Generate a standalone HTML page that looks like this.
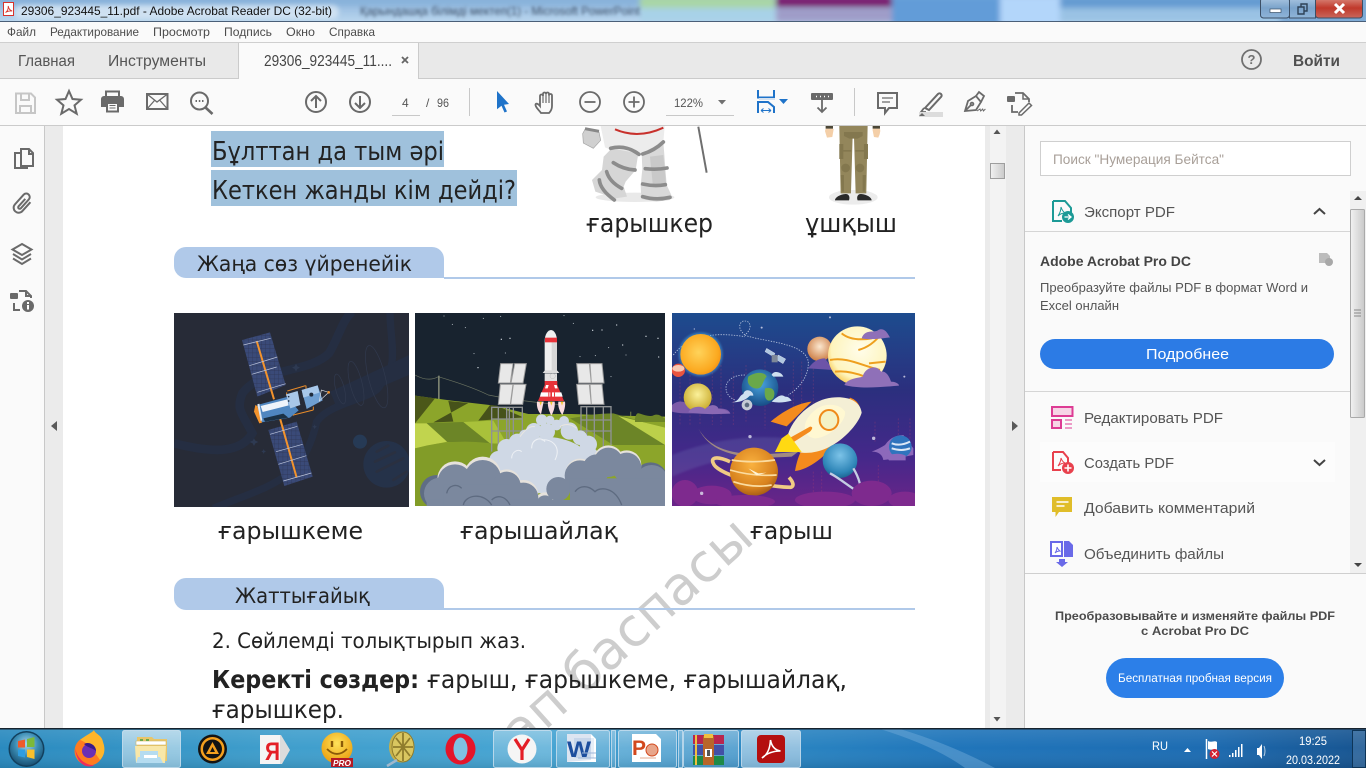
<!DOCTYPE html>
<html><head><meta charset="utf-8"><title>Acrobat Reader</title>
<style>
html,body{margin:0;padding:0;width:1366px;height:768px;overflow:hidden;background:#fff}
svg{display:block;overflow:hidden}
.u{font-family:"Liberation Sans",sans-serif}
.d{font-family:"DejaVu Sans",sans-serif;fill:#222}
</style></head><body>
<svg width="1366" height="768" viewBox="0 0 1366 768" xmlns="http://www.w3.org/2000/svg">
<defs>
<filter id="b2" x="-5%" y="-50%" width="110%" height="200%"><feGaussianBlur stdDeviation="1.7"/></filter>
<filter id="b1" x="-5%" y="-50%" width="110%" height="200%"><feGaussianBlur stdDeviation="2.5"/></filter>
<filter id="b3"><feGaussianBlur stdDeviation="3"/></filter>
<linearGradient id="tb" x1="0" x2="1" y1="0" y2="0">
<stop offset="0" stop-color="#2a8abf"/><stop offset=".2" stop-color="#3f9ecc"/><stop offset=".4" stop-color="#47a5d3"/><stop offset=".55" stop-color="#2c88c3"/><stop offset=".7" stop-color="#2075ba"/><stop offset=".88" stop-color="#1d6cb2"/><stop offset="1" stop-color="#175490"/></linearGradient>
<linearGradient id="tv" x1="0" x2="0" y1="0" y2="1"><stop offset="0" stop-color="#fff" stop-opacity=".1"/><stop offset=".5" stop-color="#fff" stop-opacity="0"/><stop offset="1" stop-color="#000" stop-opacity=".1"/></linearGradient>
<linearGradient id="btn" x1="0" x2="0" y1="0" y2="1"><stop offset="0" stop-color="#fff" stop-opacity=".32"/><stop offset="1" stop-color="#fff" stop-opacity=".12"/></linearGradient>
<linearGradient id="btnA" x1="0" x2="0" y1="0" y2="1"><stop offset="0" stop-color="#fff" stop-opacity=".6"/><stop offset="1" stop-color="#fff" stop-opacity=".38"/></linearGradient>
<linearGradient id="tt" x1="0" x2="0" y1="0" y2="1"><stop offset="0" stop-color="#8fb6dd"/><stop offset="1" stop-color="#bad6ee"/></linearGradient>
<linearGradient id="cls" x1="0" x2="0" y1="0" y2="1"><stop offset="0" stop-color="#d9867a"/><stop offset=".5" stop-color="#c0392b"/><stop offset="1" stop-color="#c9675c"/></linearGradient>
<linearGradient id="wb" x1="0" x2="0" y1="0" y2="1"><stop offset="0" stop-color="#a9c5e0"/><stop offset=".5" stop-color="#7ba3cb"/><stop offset="1" stop-color="#8fb4d8"/></linearGradient>
<radialGradient id="orb" cx=".5" cy=".35" r=".7"><stop offset="0" stop-color="#a8d8ec"/><stop offset=".5" stop-color="#3a8cb4"/><stop offset="1" stop-color="#14486a"/></radialGradient>
<linearGradient id="scrollT" x1="0" x2="1" y1="0" y2="0"><stop offset="0" stop-color="#f2f2f2"/><stop offset="1" stop-color="#c9c9c9"/></linearGradient>
<linearGradient id="sp" x1="0" x2="0" y1="0" y2="1"><stop offset="0" stop-color="#1d4c8e"/><stop offset=".4" stop-color="#2b2f7e"/><stop offset=".75" stop-color="#45288a"/><stop offset="1" stop-color="#6a2488"/></linearGradient>
<radialGradient id="sun" cx=".45" cy=".45" r=".6"><stop offset="0" stop-color="#ffd35a"/><stop offset=".8" stop-color="#fba81f"/><stop offset="1" stop-color="#f58f12"/></radialGradient>
<radialGradient id="jup" cx=".55" cy=".4" r=".7"><stop offset="0" stop-color="#fffdea"/><stop offset=".7" stop-color="#fef4bd"/><stop offset="1" stop-color="#f7b924"/></radialGradient>
<radialGradient id="sat" cx=".45" cy=".35" r=".7"><stop offset="0" stop-color="#f9b13f"/><stop offset=".7" stop-color="#d8821e"/><stop offset="1" stop-color="#9c5412"/></radialGradient>
<radialGradient id="blu" cx=".5" cy=".35" r=".7"><stop offset="0" stop-color="#7cc3e8"/><stop offset=".7" stop-color="#2f86b8"/><stop offset="1" stop-color="#175a88"/></radialGradient>
<radialGradient id="earth" cx=".5" cy=".4" r=".65"><stop offset="0" stop-color="#4aa5e0"/><stop offset="1" stop-color="#12467f"/></radialGradient>
<radialGradient id="ven" cx=".5" cy=".4" r=".6"><stop offset="0" stop-color="#fbf19a"/><stop offset="1" stop-color="#c9aa2c"/></radialGradient>
<radialGradient id="mar" cx=".5" cy=".4" r=".65"><stop offset="0" stop-color="#fbe7cf"/><stop offset="1" stop-color="#c9753a"/></radialGradient>
<radialGradient id="smile" cx=".5" cy=".35" r=".7"><stop offset="0" stop-color="#ffe25a"/><stop offset="1" stop-color="#e89a0a"/></radialGradient>
<clipPath id="c1"><rect x="174" y="313" width="235" height="194"/></clipPath>
<clipPath id="c2"><rect x="15" y="24" width="750" height="579"/></clipPath>
<clipPath id="c3"><rect x="21" y="24" width="729" height="579"/></clipPath>
<clipPath id="doc"><rect x="63" y="126" width="922" height="602"/></clipPath>
<pattern id="grid" width="13" height="13" patternUnits="userSpaceOnUse"><rect width="13" height="13" fill="#3a4a78"/><path d="M0 0H13M0 0V13" stroke="#2d3654" stroke-width="2"/></pattern>
</defs>

<!-- title bar -->
<rect width="1366" height="22" fill="url(#tt)"/>
<g filter="url(#b3)">
<rect x="640" y="-4" width="135" height="12" fill="#a9d6a6"/>
<rect x="640" y="8" width="135" height="14" fill="#a8d2e8"/>
<rect x="0" y="-6" width="640" height="11" fill="#88b2da"/>
<rect x="776" y="-4" width="116" height="11" fill="#7a1e70"/>
<rect x="776" y="8" width="116" height="14" fill="#9f9cc8"/>
<rect x="892" y="-4" width="110" height="30" fill="#629cd8"/>
<rect x="1000" y="-4" width="60" height="30" fill="#b3d6fa"/>
<rect x="1060" y="-4" width="220" height="12" fill="#659bd2"/>
<rect x="1060" y="8" width="220" height="14" fill="#9ac2e4"/>
<rect x="1280" y="-4" width="90" height="30" fill="#7eaad6"/>
</g>
<rect x="14" y="5" width="325" height="14" rx="7" fill="#dce9f5" opacity=".75" filter="url(#b1)"/>
<text class="u" x="360" y="15" font-size="12" fill="#3c5068" filter="url(#b2)" textLength="280" lengthAdjust="spacingAndGlyphs">Қарындашқа білімді мектеп(1) - Microsoft PowerPoint</text>
<rect x="0" y="21" width="1366" height="1" fill="#4a5f78"/>
<rect x="3.5" y="2.5" width="10" height="13" fill="#fff" stroke="#d8342c"/>
<path d="M5.5 12.5c2-1 3-4 2.700-6.500.4 2.500 2 4.500 4 5-2-.2-4.800.2-6.700 1.500z" fill="none" stroke="#d8342c" stroke-width=".9"/>
<text class="u" x="21" y="15" font-size="12" fill="#111" textLength="311" lengthAdjust="spacingAndGlyphs">29306_923445_11.pdf - Adobe Acrobat Reader DC (32-bit)</text>
<!-- window buttons -->
<rect x="1260.500" y="-2" width="29" height="20" rx="3" fill="url(#wb)" stroke="#3c4f66"/>
<rect x="1289.500" y="-2" width="26" height="20" fill="url(#wb)" stroke="#3c4f66"/>
<rect x="1315.500" y="-2" width="47" height="20" rx="3" fill="url(#cls)" stroke="#3c4f66"/>
<rect x="1270" y="9" width="11" height="3.500" fill="#fff" stroke="#3a5068" stroke-width=".7"/>
<path d="M1298 7h6v7h-6zM1301 7V4h6v7h-3" fill="none" stroke="#2e4257" stroke-width="1.400"/>
<path d="M1335 4l9 9M1344 4l-9 9" stroke="#fff" stroke-width="3"/>

<!-- menu -->
<rect y="22" width="1366" height="20" fill="#fafafa"/>
<rect y="42" width="1366" height="1" fill="#cfcfcf"/>
<g class="u" font-size="12" fill="#4c4c4c">
<text x="7" y="36" textLength="29" lengthAdjust="spacingAndGlyphs">Файл</text>
<text x="50" y="36" textLength="89" lengthAdjust="spacingAndGlyphs">Редактирование</text>
<text x="153" y="36" textLength="57" lengthAdjust="spacingAndGlyphs">Просмотр</text>
<text x="224" y="36" textLength="48" lengthAdjust="spacingAndGlyphs">Подпись</text>
<text x="286" y="36" textLength="29" lengthAdjust="spacingAndGlyphs">Окно</text>
<text x="329" y="36" textLength="46" lengthAdjust="spacingAndGlyphs">Справка</text>
</g>
<!-- tabs -->
<rect y="43" width="1366" height="35" fill="#e9e9e9"/>
<rect y="78" width="1366" height="1" fill="#cbcbcb"/>
<rect x="239" y="43" width="179" height="36" fill="#fafafa"/>
<path d="M238.500 43V79M418.500 43V79" stroke="#cbcbcb"/>
<g class="u" font-size="15.500" fill="#555">
<text x="18" y="66" textLength="57" lengthAdjust="spacingAndGlyphs">Главная</text>
<text x="108" y="66" textLength="98" lengthAdjust="spacingAndGlyphs">Инструменты</text>
<text x="264" y="66" textLength="128" lengthAdjust="spacingAndGlyphs" fill="#444">29306_923445_11....</text>
</g>
<path d="M402 57l6 6M408 57l-6 6" stroke="#666" stroke-width="1.800"/>
<circle cx="1251.500" cy="59.500" r="9.500" fill="none" stroke="#707070" stroke-width="1.800"/>
<text class="u" x="1251.500" y="64" font-size="13" font-weight="bold" fill="#707070" text-anchor="middle">?</text>
<text class="u" x="1293" y="66" font-size="15.500" font-weight="bold" fill="#505050" textLength="47" lengthAdjust="spacingAndGlyphs">Войти</text>

<!-- toolbar -->
<rect y="79" width="1366" height="46" fill="#fafafa"/>
<rect y="125" width="1366" height="1" fill="#cbcbcb"/>
<g fill="none" stroke="#6a6a6a" stroke-width="2">
<g stroke="#c6c6c6"><path d="M16 93.500h15l4 4v15.500H16z"/><path d="M21 94v6h8v-6M20 113v-7h11v7"/></g>
<path d="M69 91l3.500 8 8.500.7-6.500 5.700 2.200 8.300L69 109l-7.700 4.700 2.200-8.300-6.500-5.700 8.500-.7z"/>
<path d="M106 98v-6.500h13V98"/>
<path d="M106 106h-4v-7a2 2 0 0 1 2-2h17a2 2 0 0 1 2 2v7h-4" fill="#6a6a6a"/>
<rect x="107" y="103" width="11" height="8.500" fill="#fafafa"/>
<path d="M109.500 105.500h6M109.500 108h6" stroke-width="1"/>
<rect x="147" y="94" width="20.500" height="15"/>
<path d="M147 94l10 8 10.500-8M147 109l7.500-8.500M167.500 109l-7.500-8.500" stroke-width="1.300"/>
<circle cx="199.500" cy="101" r="8.500"/><path d="M205.500 107.500l7 6.500" stroke-width="2.600"/>
<path d="M195.500 101h1.500M198.800 101h1.500M202 101h1.500" stroke-width="2"/>
<circle cx="316" cy="102" r="10"/><path d="M316 108v-12M311 101l5-5 5 5"/>
<circle cx="360" cy="102" r="10"/><path d="M360 96v12M355 103l5 5 5-5"/>
</g>
<text class="u" x="402" y="107" font-size="12" fill="#555">4</text>
<text class="u" x="426" y="107" font-size="12" fill="#555">/</text>
<text class="u" x="437" y="107" font-size="12" fill="#555" textLength="12" lengthAdjust="spacingAndGlyphs">96</text>
<rect x="392" y="115" width="28" height="1" fill="#c8c8c8"/>
<rect x="469" y="88" width="1" height="28" fill="#c8c8c8"/>
<path d="M497 91l12 13-5 .8 3 6.700-2.500 1-3-6.700-4.500 3.500z" fill="#1f73c9"/>
<g fill="none" stroke="#6a6a6a" stroke-width="1.800">
<path d="M541 113c-2-3-6-6-5.500-8.500.5-1.500 2.500-1 4.500 1.500V96a1.500 1.500 0 0 1 3 0v-2a1.500 1.500 0 0 1 3 0a1.500 1.500 0 0 1 3 0v1.500a1.500 1.500 0 0 1 3 0V106c0 3-1 5-3 7z"/>
<path d="M543 96v7M546 94v9M549 94v9" stroke-width="1.200"/>
<circle cx="590" cy="102" r="10"/><path d="M584.500 102h11"/>
<circle cx="634" cy="102" r="10"/><path d="M628.500 102h11M634 96.500v11"/>
<path d="M822 100v12M817.500 107.500l4.500 4.500 4.500-4.500" stroke-width="1.800"/>
<path d="M878 93h19v15h-8l-4 5v-5h-7z" stroke-width="2"/>
<path d="M882 98h11M882 102h8" stroke-width="1.200"/>
<path d="M925 108l13-14c2-2 5 1 3 3l-12 13z" stroke-width="2"/>
<path d="M924 108l-3 4h5"/>
<path d="M965 111l3-10 8-5 5 6-5 8z"/><path d="M976 96l3-4 5 4-3 6"/><path d="M965 111l6-6"/><circle cx="972" cy="104" r="1.400"/>
<path d="M1015 93h8l6 6v3M1012 105v7h6"/><path d="M1023 93v6h6" stroke-width="1.500"/>
<path d="M1019 113l10-10 2.500 2.500-10 9.500h-2.500z" stroke-width="1.500"/>
</g>
<rect x="1007" y="96" width="8" height="6" rx="1" fill="#6a6a6a"/>
<rect x="919" y="112" width="24" height="5" fill="#dcdcdc"/>
<path d="M919 116l3-3 3 3z" fill="#6a6a6a"/>
<path d="M977 111l3-2 .7 2 2-2 .7 2 2-2" fill="none" stroke="#6a6a6a"/>
<rect x="811" y="93" width="22" height="7" rx="1" fill="#6a6a6a"/>
<path d="M816 96.500h1M820 96.500h1M824 96.500h1M828 96.500h1" stroke="#fff" stroke-width="1.500"/>
<text class="u" x="674" y="107" font-size="12" fill="#555" textLength="29" lengthAdjust="spacingAndGlyphs">122%</text>
<path d="M718 100h8l-4 4.500z" fill="#707070"/>
<rect x="666" y="115" width="68" height="1" fill="#c8c8c8"/>
<g fill="none" stroke="#1f73c9" stroke-width="2"><path d="M758 90v7.500h16V90"/><path d="M758 113v-11h10l6 5v6"/></g>
<rect x="759" y="98" width="16" height="2" fill="#d5e2f0"/>
<path d="M761 110.500h10M761 110.500l2.500-2M761 110.500l2.500 2M771 110.500l-2.500-2M771 110.500l-2.500 2" stroke="#1f73c9" fill="none"/>
<path d="M779 99h9l-4.500 5z" fill="#1f73c9"/>
<rect x="854" y="88" width="1" height="28" fill="#c8c8c8"/>

<!-- left panel + gray -->
<rect y="126" width="44" height="602" fill="#fafafa"/>
<rect x="44" y="126" width="1" height="602" fill="#c8c8c8"/>
<rect x="45" y="126" width="18" height="602" fill="#ebebeb"/>
<path d="M57 421v10l-6-5z" fill="#5a5a5a"/>
<g fill="none" stroke="#6a6a6a" stroke-width="2">
<path d="M21 149h8l4 4v13H21z"/><path d="M29 149v5h4"/><path d="M21 153h-6v15h12v-2"/>
<path d="M27 197v12a5 5 0 0 1-10 0V196a3.500 3.500 0 0 1 7 0v12a1.500 1.500 0 0 1-3 0v-10" transform="rotate(42 22 204)"/>
<path d="M22 244l9.500 5.500L22 255l-9.500-5.500z"/><path d="M13 254l9 5.500 9-5.500M13 258.500l9 5.500 9-5.500"/>
<path d="M19 291h7l5 5v2M14 303v7h6"/><path d="M26 291v5h5"/>
</g>
<rect x="10" y="293" width="8" height="6" rx="1" fill="#6a6a6a"/>
<circle cx="28" cy="306" r="6" fill="#6a6a6a"/><rect x="27" y="305" width="2" height="4.500" fill="#fff"/><rect x="27" y="302" width="2" height="2" fill="#fff"/>

<!-- page -->
<rect x="63" y="126" width="922" height="602" fill="#fff"/>
<rect x="985" y="126" width="39" height="602" fill="#ebebeb"/>
<rect x="990" y="126" width="16" height="602" fill="#f3f3f3"/>
<path d="M993.500 134h7l-3.500-4.500z" fill="#555"/>
<path d="M993.500 717h7l-3.500 4.500z" fill="#555"/>
<rect x="990.500" y="163.500" width="14" height="15" fill="url(#scrollT)" stroke="#9e9e9e"/>
<path d="M1012 421v10l6-5z" fill="#5a5a5a"/>
<rect x="1024" y="126" width="1" height="602" fill="#c8c8c8"/>

<g clip-path="url(#doc)">
<!-- watermark -->
<text class="d" transform="translate(756,541) rotate(-42)" text-anchor="end" font-size="53" style="fill:#cdcdcd">ап баспасы</text>

<!-- highlighted lines -->
<rect x="211" y="131" width="233" height="36" fill="#9fc1dc"/>
<rect x="211" y="170" width="306" height="36" fill="#9fc1dc"/>
<text class="d" x="212" y="160" font-size="26" textLength="232" lengthAdjust="spacingAndGlyphs">Бұлттан да тым әрі</text>
<text class="d" x="212" y="199" font-size="26" textLength="304" lengthAdjust="spacingAndGlyphs">Кеткен жанды кім дейді?</text>

<!-- astronaut -->
<g transform="translate(570,120) scale(.3333)">
<ellipse cx="195" cy="232" rx="118" ry="14" fill="#e9e9e9"/>
<path d="M385 20l25 138" stroke="#6f6f6f" stroke-width="6"/>
<path d="M45 28l42 8 5 25-22 24-30-16-2-28z" fill="#d0d0d0" stroke="#a5a5a5" stroke-width="2"/>
<path d="M45 26l42 8" stroke="#888" stroke-width="9"/>
<path d="M92 18h192l-4 50-45 34-25 2-8 10-72-22-25-10z" fill="#ececec"/>
<path d="M135 28q70 30 145-5" fill="none" stroke="#c8312c" stroke-width="6"/>
<path d="M125 85l80 15-8 50-30 35-6 15 10 30-35 5-60-20-10-35 30-30 5-40z" fill="#d6d6d6"/>
<path d="M215 100l65-35 10 130 14 30-5 15-40 5-45-8-2-40 5-50z" fill="#d9d9d9"/>
<path d="M240 110l40-5 8 85-40 0z" fill="#c9c9c9"/>
<path d="M122 85q45-12 85 18M218 102q35-10 62-36M130 128q30 20 65 22M226 146q35 4 65-2M110 155q8 30 45 50M218 192q35 8 68 2M88 180q3 30 45 60M218 230q40 12 82 2" fill="none" stroke="#8c8c8c" stroke-width="11" stroke-linecap="round"/>
</g>
<!-- soldier -->
<g transform="translate(570,120) scale(.3333)">
<ellipse cx="850" cy="232" rx="73" ry="22" fill="#ececec"/>
<path d="M808 18h85l-4 202h-32l-5-172h-4l-5 172h-31z" fill="#93865b"/>
<path d="M822 36h56v12l-15 8h-25l-16-8z" fill="#83774e"/>
<path d="M808 72h12v45h-12zM882 72h12v45h-12zM816 90h28v5h-28zM856 90h28v5h-28z" fill="#83774e"/>
<circle cx="827" cy="144" r="13" fill="#83774e"/><circle cx="870" cy="144" r="13" fill="#83774e"/>
<path d="M812 165h10v50h-7zM878 165h10l-3 50h-7z" fill="#83774e"/>
<path d="M795 241c0-8 14-18 32-19 12 0 13 12 10 19zM905 241c0-8-14-18-32-19-12 0-13 12-10 19z" fill="#2a2a2a"/>
<path d="M767 26h22l2 2-4 23-16 2-6-20z" fill="#f4cfa8"/><path d="M908 26h22l1 7-2 10-4 10-13-2-4-20z" fill="#f4cfa8"/>
<path d="M767 18h22v8h-22zM908 18h22v8h-22z" fill="#4a4636"/>
</g>
<text class="d" x="586" y="232" font-size="26" textLength="127" lengthAdjust="spacingAndGlyphs">ғарышкер</text>
<text class="d" x="805" y="232" font-size="26" textLength="92" lengthAdjust="spacingAndGlyphs">ұшқыш</text>

<!-- section 1 -->
<path d="M186 247h246a12 12 0 0 1 12 12v19H186a12 12 0 0 1-12-12v-7a12 12 0 0 1 12-12z" fill="#b0c9e9"/>
<rect x="444" y="277" width="471" height="2" fill="#b0c9e9"/>
<text class="d" x="197" y="271" font-size="21" textLength="215" lengthAdjust="spacingAndGlyphs">Жаңа сөз үйренейік</text>

<!-- image 1 satellite -->
<g clip-path="url(#c1)">
<rect x="174" y="313" width="235" height="194" fill="#272b37"/>
<g transform="translate(170,305) scale(.33333)">
<g fill="none" stroke="#252e42" stroke-width="26">
<path d="M12 415c120 30 200 30 235-30-30-60-50-70-30-120 60-80 200-60 260-120 30-50 40-100 70-125"/>
<path d="M130 610c170-70 270-80 310-260 40-60 180-70 190-110 60-50 30-130 30-220" stroke-width="22"/>
</g>
<path d="M480 260q90-40 237-110v60q-140 60-220 90z" fill="#252e42"/>
<g fill="none" stroke="#313a4f" stroke-width="2"><ellipse cx="510" cy="252" rx="13" ry="46" transform="rotate(-14 510 252)"/><ellipse cx="558" cy="235" rx="18" ry="68" transform="rotate(-14 558 235)"/><ellipse cx="620" cy="215" rx="25" ry="96" transform="rotate(-14 620 215)"/></g>
<circle cx="650" cy="478" r="70" fill="#253249"/>
<g fill="none" stroke="#2a3040" stroke-width="8" stroke-linecap="round"><path d="M620 440l35-18M615 470l60-28M620 500l80-40M670 525l40-25"/></g>
<circle cx="570" cy="410" r="21" fill="#263a55"/>
<g fill="#2e3a52"><path d="M378 176l4 8 8 4-8 4-4 8-4-8-8-4 8-4zM252 400l4 7 9 4-9 4-4 8-4-8-9-4 9-4zM434 358l2 5 5 2-5 3-2 5-2-5-5-3 5-2zM281 432l2 5 5 2-5 3-2 5-2-5-5-3 5-2z"/></g>
<path d="M216 105l84-23 47 158-85 35z" fill="url(#grid)"/>
<path d="M295 375l85-25 48 165-85 28z" fill="url(#grid)"/>
<path d="M260 108l52 175M330 340l50 178" stroke="#f3932c" stroke-width="6"/>
<path d="M220 120l82-20M238 182l84-26M245 208l75-22M262 262l85-26M300 388l82-24M318 440l80-22M325 478l84-26M340 528l84-24" stroke="#bcc4da" stroke-width="2"/>
<path d="M352 258l55-16M370 330l60-15" stroke="#e88b2a" stroke-width="3" fill="none"/>
<path d="M350 262v10M408 242v10M370 332v-10M430 315v-10" stroke="#e88b2a" stroke-width="3"/>
<path d="M262 300l88-24 36 40-26 22-90 15z" fill="#4f86c0"/>
<path d="M272 303l80-20 4 18-78 20z" fill="#eef3fa"/>
<path d="M280 340l60-14 15 12-70 12z" fill="#1b3145"/>
<path d="M348 268l35-10 8 42-30 10z" fill="#a9c7e8"/>
<path d="M395 255l48-14 15 45-48 26z" fill="#6f9fd2"/><path d="M395 255l48-14 5 22-48 15z" fill="#a8c8ea"/>
<circle cx="424" cy="269" r="6" fill="#1f2b3c"/>
<circle cx="356" cy="275" r="2.500" fill="#1f2b3c"/><circle cx="356" cy="288" r="2.500" fill="#1f2b3c"/>
<path d="M256 300l-4 20 16 35 8-2-14-50z" fill="#f3932c"/><path d="M262 298l10 50 5-2-9-50z" fill="#dfe9f5"/>
<path d="M448 288l6-33 22 7z" fill="none" stroke="#d9dde5" stroke-width="2"/><circle cx="476" cy="262" r="4" fill="#f3932c"/>
</g>
</g>

<!-- image 2 rocket -->
<g transform="translate(410,305) scale(.33333)">
<g clip-path="url(#c2)">
<rect x="15" y="24" width="750" height="579" fill="#18232f"/>
<g fill="#cfd6dc"><circle cx="102" cy="33" r="1.500"/><circle cx="220" cy="40" r="1.500"/><circle cx="127" cy="58" r="1.500"/><circle cx="272" cy="34" r="1.500"/><circle cx="166" cy="68" r="1.500"/><circle cx="300" cy="100" r="2"/><circle cx="274" cy="103" r="2"/><circle cx="192" cy="146" r="1.500"/><circle cx="204" cy="188" r="2"/><circle cx="286" cy="144" r="1.500"/><circle cx="548" cy="76" r="2"/><circle cx="576" cy="75" r="2"/><circle cx="620" cy="60" r="2"/><circle cx="708" cy="94" r="2"/><circle cx="744" cy="100" r="2"/><circle cx="638" cy="120" r="2"/><circle cx="596" cy="128" r="1.500"/><circle cx="648" cy="150" r="1.500"/><circle cx="746" cy="156" r="2"/><circle cx="556" cy="152" r="1.500"/><circle cx="510" cy="155" r="1.500"/><circle cx="490" cy="55" r="1.500"/><circle cx="462" cy="32" r="1.500"/><circle cx="603" cy="215" r="1.500"/></g>
<path d="M15 210q40 22 70 5 100 30 150 55 100 20 230 30" fill="none" stroke="#6a7260" stroke-width="2"/>
<rect x="84" y="212" width="5" height="75" fill="#7b8270"/>
<rect x="660" y="320" width="4" height="22" fill="#5d6a45"/>
<path d="M15 272l110 15 130 15 100 25 130 0 135 5 245 5v270H15z" fill="#8ca52a"/>
<path d="M15 272l60 8-60 75z" fill="#4b5719"/>
<path d="M115 288l60 6-105 58 60-2z" fill="#46521a"/>
<path d="M240 300l20 2 80 35-135 10z" fill="#46521a"/>
<path d="M15 355l35 0 62 55-97 20z" fill="#c1d44e"/>
<path d="M50 354l110-3 82 65-130-5z" fill="#6c8527"/>
<path d="M160 351l90-4 40 68-50 0z" fill="#a9c13a"/>
<path d="M610 325q-30 0-70 5l-60 10 130 80 155 0v-50z" fill="#6c8527"/>
<path d="M625 333l140 35v52z" fill="#bcd04a"/>
<path d="M15 430q150-40 300 0v173H15z" fill="#829c28"/>
<path d="M300 420h465v183H300z" fill="#8ca52a"/>
<path d="M675 340c5-20 10-15 15-14 15 5 30 10 40 5 15-5 20 0 35 10v10h-90z" fill="#6c8527"/>
<g stroke="#8f9294" stroke-width="4" fill="none">
<path d="M245 440V307h92v120M265 440V307M290 420V307M310 420V307M298 400V307M245 378h92M245 342h92"/>
<path d="M513 420V305h90v115M530 430V305M553 430V305M580 430V305M513 345h90M513 378h90"/>
</g>
<g fill="#e8e8e8" stroke="#9c9c9c" stroke-width="3">
<path d="M272 176h37l-8 58h-36zM314 176h35l-10 58h-36zM271 238h38l-8 60h-36zM310 238h38l-10 60h-36z"/>
<path d="M500 176h38l6 58h-38zM540 176h36l6 58h-38zM500 238h38l6 60h-38zM540 238h36l6 60h-38z"/>
</g>
<path d="M404 108c0-20 10-33 19-33s18 13 18 33v90h-37z" fill="#efefef"/>
<path d="M425 108h16v90h-16z" fill="#d7d7d7"/>
<rect x="405" y="98" width="36" height="14" fill="#e8333a"/>
<path d="M398 204q6-8 8-8h34q2 0 8 8z" fill="#ddd"/><rect x="404" y="205" width="37" height="23" fill="#e2e2e2"/>
<circle cx="428" cy="213" r="8" fill="none" stroke="#aaa"/>
<path d="M404 228h38v12l20 48h-78l20-48z" fill="#e8333a"/>
<path d="M393 262h61l4 13h-68zM408 240l8 0-3 10h-8zM432 240l8 0 3 10h-8z" fill="#fff"/>
<path d="M415 262h3v13h-3zM432 262h3v13h-3zM421 240h5v40h-5z" fill="#e8333a"/>
<path d="M381 290h20l-8 38c-8-8-14-22-12-38zM414 290h20c2 12-2 28-10 42-6-12-12-28-10-42zM445 290h20c2 12-2 28-8 40-8-10-14-26-12-40z" fill="#fbdcdf"/>
<path d="M388 290h8l-4 12zM420 290h8l-4 12zM452 290h8l-4 12z" fill="#f5c92d"/>
<!-- light cloud -->
<g fill="#cfd8e5">
<circle cx="395" cy="345" r="17"/><circle cx="420" cy="345" r="13"/><circle cx="462" cy="348" r="15"/><circle cx="440" cy="360" r="16"/><circle cx="372" cy="378" r="24"/><circle cx="345" cy="392" r="18"/><circle cx="410" cy="380" r="25"/><circle cx="478" cy="378" r="26"/><circle cx="510" cy="398" r="22"/><circle cx="322" cy="412" r="26"/><circle cx="535" cy="418" r="26"/><circle cx="290" cy="430" r="28"/><circle cx="265" cy="465" r="27"/><circle cx="540" cy="450" r="24"/><ellipse cx="400" cy="480" rx="145" ry="85"/>
</g>
<path d="M365 430c0-30 30-35 40-20M395 405c30-5 60 20 40 60M305 460c0-20 20-30 30-20" fill="none" stroke="#eef1f5" stroke-width="3"/>
<path d="M330 395q25-35 45-30M450 365q25-15 50 5" fill="none" stroke="#e9e6e0" stroke-width="3"/>
<!-- gray clouds -->
<circle cx="80" cy="560" r="50" fill="#5f6d84"/>
<circle cx="722" cy="522" r="50" fill="#5f6d84"/>
<g fill="#e6e2dc">
<circle cx="135" cy="522" r="53"/><circle cx="218" cy="510" r="55"/><circle cx="340" cy="570" r="45"/><circle cx="405" cy="590" r="28"/><circle cx="510" cy="505" r="44"/><circle cx="595" cy="465" r="44"/><circle cx="650" cy="480" r="44"/><circle cx="290" cy="535" r="42"/>
</g>
<g fill="#7b889e">
<circle cx="90" cy="566" r="48"/><circle cx="135" cy="530" r="52"/><circle cx="218" cy="520" r="55"/><circle cx="290" cy="542" r="42"/><circle cx="340" cy="578" r="45"/><circle cx="405" cy="597" r="26"/><circle cx="445" cy="552" r="36"/><circle cx="510" cy="512" r="46"/><circle cx="560" cy="490" r="42"/><circle cx="595" cy="472" r="44"/><circle cx="650" cy="487" r="44"/><circle cx="725" cy="530" r="50"/><rect x="50" y="585" width="715" height="20"/><rect x="480" y="520" width="285" height="85"/><rect x="100" y="540" width="200" height="65"/>
</g>
<g fill="none" stroke="#5e6b80" stroke-width="4"><path d="M110 565c5-25 30-30 45-15M160 600c5-30 60-40 85 0M245 585c15-15 40-15 55 15M495 560c15-20 40-20 60 0 15-15 60-15 80 40"/></g>
</g></g>

<!-- image 3 space -->
<g transform="translate(665,305) scale(.33333)">
<g clip-path="url(#c3)">
<rect x="21" y="24" width="729" height="579" fill="url(#sp)"/>
<path d="M21 450q200-80 420-40l-60 45q-180-20-360 60z" fill="#6c6cb0" opacity=".3" filter="url(#b3)"/>
<g fill="none" stroke="#c4476f" stroke-width="3" opacity=".25" stroke-dasharray="6 5"><path d="M45 220v140M75 210v150M105 230v130M142 180v180M168 180v180M205 200v160M243 180v170M300 170v200M385 170v200M410 170v200M445 180v150M630 350v60M700 340v60M735 340v60M445 500v90M470 500v90M640 480v70"/></g>
<path d="M100 370c40 70 120 90 300 70l-20 15c-150 10-240-5-280-85z" fill="#b79f7d" opacity=".8"/>
<g fill="none" stroke="#b9c5de" stroke-width="2.500" stroke-dasharray="4 4">
<path d="M25 150q60-80 215-55M240 90c-30-25-10-45 0-42 15 0 25 20 0 42 40 20 190 20 190 85 0 60-60 95-60 95"/>
<path d="M240 210c-70 0-70 60-30 75"/>
</g>
<circle cx="107" cy="148" r="66" fill="#4ab0e8" opacity=".5" filter="url(#b3)"/>
<circle cx="107" cy="148" r="61" fill="url(#sun)"/>
<circle cx="40" cy="196" r="20" fill="#e9543f"/><ellipse cx="40" cy="190" rx="18" ry="10" fill="#f8c9b3"/>
<path d="M21 300q30-25 60 10h80q30 0 35 15h-130q-30 0-45-5z" fill="#7c5aa8"/>
<circle cx="98" cy="277" r="42" fill="url(#ven)"/>
<path d="M70 322c10-20 40-20 50-10 20-20 40-10 40 0 20 0 35 10 36 14-40 2-90 2-126-4z" fill="#8a69b4"/>
<circle cx="464" cy="132" r="37" fill="url(#mar)"/>
<path d="M430 190q20-30 50-30l25 35z" fill="#6d54a8"/>
<circle cx="577" cy="152" r="88" fill="url(#jup)"/>
<path d="M530 85q30 25 90 15M495 165c50-10 90 15 150 30M510 200q40-5 90 15M580 135q40-10 70-50M612 175l50-5" fill="none" stroke="#ee9f1e" stroke-width="6"/>
<path d="M590 100c10-30 40-15 50-25 20-10 30 15 35 22-30 4-60 8-85 3z" fill="#8f70b8"/>
<path d="M538 240c10-20 40-20 55-25 5-25 40-40 55-15 20-5 30 30 30 30 10 0 24 5 24 12-60 5-120 10-164-2z" fill="#8f70b8"/>
<circle cx="285" cy="248" r="55" fill="url(#earth)"/>
<path d="M250 215c20-15 50-15 55 0-15 15-10 40-35 35-20-5-25-20-20-35zM300 250c20-5 35 5 25 30-15 15-30 5-25-30z" fill="#6aa84a"/>
<path d="M195 292c30 0 25-20 40-25 5-20 30-10 30 5h-10c-20 20-40 20-60 20zM320 210c5-15 30-10 35 5h-30zM320 290c15-15 30-25 40-15 10 0 15 5 20 12-20 5-40 8-60 3z" fill="#cfe0f0"/>
<circle cx="246" cy="300" r="16" fill="#c5cbd6"/><circle cx="246" cy="300" r="7" fill="#5c6b80"/>
<path d="M305 130l25 15-5 10-25-15zM340 150l22 12-8 14-20-12z" fill="#b0c7e0" stroke="#fff"/><rect x="320" y="150" width="18" height="22" fill="#7d8898"/>
<!-- rocket -->
<path d="M440 290c-50 5-100 40-123 60l48 14z" fill="#f48b1d"/>
<path d="M420 420l90-10c-20 40-80 85-120 88 5-30 15-60 30-78z" fill="#f48b1d"/>
<path d="M555 278c30 10 35 40 30 50l-50-15z" fill="#f48b1d"/>
<path d="M370 385c-5 20 0 50 40 58 90 10 170-80 180-120-5-40-50-50-90-45-50 5-110 50-130 107z" fill="#f4efd5"/>
<path d="M445 320c30-30 80-25 95 0 5 30-50 80-90 80-40-5-40-50-5-80z" fill="#fff8d2"/>
<ellipse cx="492" cy="345" rx="28" ry="30" fill="#f4f2c6" stroke="#ef8a1b" stroke-width="6"/>
<path d="M345 415l90-50c15 0 0 15 0 15l-60 38z" fill="#f48b1d"/>
<path d="M350 400l20-14 40 55-80 0z" fill="#ffd912"/>
<!-- saturn -->
<path d="M195 470c-45-20-58-10-50 5 10 30 140 70 232 72 10-2 10-14-5-30" fill="none" stroke="#f0cc84" stroke-width="11"/>
<circle cx="267" cy="500" r="72" fill="url(#sat)"/>
<path d="M200 465q60 10 130 0M195 495q70 20 140 15M205 530q60 20 115 10" fill="none" stroke="#fbdca0" stroke-width="5"/>
<path d="M250 490l30 15 25-2-30 8z" fill="#fff3d4"/>
<!-- uranus -->
<circle cx="525" cy="467" r="52" fill="url(#blu)"/>
<path d="M495 505c30 15 70 50 85 55 15-5 0-45-15-70" fill="none" stroke="#c5cde3" stroke-width="7"/>
<path d="M620 440q25-10 40-20 20-30 55-30l30 40v20q-50 10-90 15-5-25-35-25z" fill="#8d69bb"/>
<circle cx="706" cy="425" r="34" fill="#2f74bd"/><path d="M680 415q25 10 55-5M680 430q30 10 55 0" stroke="#dbe8f6" stroke-width="6" fill="none"/>
<path d="M662 452c20-5 40-10 60 0v14h-50z" fill="#8d69bb"/>
<!-- bottom clouds -->
<g fill="#7e2a8e"><ellipse cx="60" cy="565" rx="40" ry="40"/><ellipse cx="140" cy="570" rx="60" ry="28"/><ellipse cx="240" cy="590" rx="90" ry="20"/><ellipse cx="480" cy="585" rx="90" ry="25"/><ellipse cx="620" cy="565" rx="60" ry="38"/><ellipse cx="720" cy="585" rx="50" ry="25"/></g>
<g fill="#dde" opacity=".8"><circle cx="290" cy="68" r="3"/><circle cx="495" cy="37" r="3"/><circle cx="255" cy="395" r="5"/><circle cx="626" cy="400" r="5"/><circle cx="110" cy="565" r="5"/><circle cx="718" cy="215" r="3"/><circle cx="88" cy="72" r="2"/></g>
</g></g>

<text class="d" x="218" y="539" font-size="24" textLength="145" lengthAdjust="spacingAndGlyphs">ғарышкеме</text>
<text class="d" x="460" y="539" font-size="24" textLength="158" lengthAdjust="spacingAndGlyphs">ғарышайлақ</text>
<text class="d" x="750" y="539" font-size="24" textLength="83" lengthAdjust="spacingAndGlyphs">ғарыш</text>

<!-- section 2 -->
<path d="M186 578h246a12 12 0 0 1 12 12v20H186a12 12 0 0 1-12-12v-8a12 12 0 0 1 12-12z" fill="#b0c9e9"/>
<rect x="444" y="608" width="471" height="2" fill="#b0c9e9"/>
<text class="d" x="235" y="603" font-size="21" textLength="135" lengthAdjust="spacingAndGlyphs">Жаттығайық</text>
<text class="d" x="212" y="648" font-size="21" textLength="314" lengthAdjust="spacingAndGlyphs">2. Сөйлемді толықтырып жаз.</text>
<text class="d" x="212" y="688" font-size="25" font-weight="bold" textLength="207" lengthAdjust="spacingAndGlyphs">Керекті сөздер:</text>
<text class="d" x="427" y="688" font-size="25" textLength="420" lengthAdjust="spacingAndGlyphs">ғарыш, ғарышкеме, ғарышайлақ,</text>
<text class="d" x="212" y="718" font-size="25" textLength="132" lengthAdjust="spacingAndGlyphs">ғарышкер.</text>
</g>

<!-- right panel -->
<rect x="1025" y="126" width="341" height="602" fill="#fafafa"/>
<rect x="1040.500" y="141.500" width="310" height="34" fill="#fff" stroke="#cfcfcf"/>
<text class="u" x="1053" y="164" font-size="14" fill="#a89f98" textLength="171" lengthAdjust="spacingAndGlyphs">Поиск "Нумерация Бейтса"</text>
<!-- panel scrollbar -->
<rect x="1350" y="191" width="16" height="382" fill="#f0f0f0"/>
<path d="M1354 200h8l-4-4z" fill="#444"/>
<path d="M1354 563h8l-4 4z" fill="#444"/>
<rect x="1350.500" y="209.500" width="14" height="208" rx="1" fill="url(#scrollT)" stroke="#aaa"/>
<path d="M1354 310h7M1354 313h7M1354 316h7" stroke="#888"/>
<!-- Export row -->
<rect x="1025" y="231" width="325" height="1" fill="#d5d5d5"/>
<path d="M1053 201h12l6 7v6M1053 201v20h9" fill="none" stroke="#1c9a96" stroke-width="2"/>
<path d="M1058 216c2-3 3-6 3-9 1 3 2.500 5 4 6-2 0-5 1-7 3z" fill="none" stroke="#1c9a96"/>
<circle cx="1068" cy="217" r="6" fill="#1c9a96"/><path d="M1064.500 217h6M1068 214.500l3 2.500-3 2.500" fill="none" stroke="#fff" stroke-width="1.300"/>
<text class="u" x="1084" y="217" font-size="15" fill="#555" textLength="91" lengthAdjust="spacingAndGlyphs">Экспорт PDF</text>
<path d="M1314 214l5.500-5 5.500 5" fill="none" stroke="#444" stroke-width="2"/>
<text class="u" x="1040" y="266" font-size="13.500" font-weight="bold" fill="#444" textLength="151" lengthAdjust="spacingAndGlyphs">Adobe Acrobat Pro DC</text>
<path d="M1319 253h8l3 3v7h-11z" fill="#bcbcbc"/><circle cx="1329" cy="262" r="4" fill="#a8a8a8"/>
<text class="u" x="1040" y="292" font-size="13" fill="#555" textLength="268" lengthAdjust="spacingAndGlyphs">Преобразуйте файлы PDF в формат Word и</text>
<text class="u" x="1040" y="310" font-size="13" fill="#555" textLength="79" lengthAdjust="spacingAndGlyphs">Excel онлайн</text>
<rect x="1040" y="339" width="294" height="30" rx="15" fill="#2c7be5"/>
<text class="u" x="1146" y="359" font-size="15" fill="#fff" textLength="83" lengthAdjust="spacingAndGlyphs">Подробнее</text>
<rect x="1025" y="391" width="325" height="1" fill="#d5d5d5"/>
<!-- edit -->
<rect x="1052" y="407" width="20.500" height="9" fill="#f7d5e6" stroke="#dd3c94" stroke-width="2"/>
<rect x="1052" y="420" width="9" height="8" fill="#f7d5e6" stroke="#dd3c94" stroke-width="2"/>
<path d="M1065 420h7M1065 424h7M1065 428h7" stroke="#dd3c94"/>
<text class="u" x="1084" y="423" font-size="15" fill="#555" textLength="139" lengthAdjust="spacingAndGlyphs">Редактировать PDF</text>
<!-- create -->
<rect x="1040" y="442" width="295" height="40" fill="#fcfcfc"/>
<path d="M1053 452h10l5 6v5M1053 452v18h8" fill="none" stroke="#e8414d" stroke-width="2" />
<path d="M1058 466c2-3 3-6 3-8 1 3 2 4 4 5-2 0-5 1-7 3z" fill="none" stroke="#e8414d"/>
<circle cx="1068" cy="468" r="6" fill="#e8414d"/><path d="M1064.500 468h7M1068 464.500v7" stroke="#fff" stroke-width="1.600"/>
<text class="u" x="1084" y="468" font-size="15" fill="#555" textLength="90" lengthAdjust="spacingAndGlyphs">Создать PDF</text>
<path d="M1314 460l5.500 5 5.500-5" fill="none" stroke="#444" stroke-width="2"/>
<!-- comment -->
<path d="M1052 497h20v15h-13l-3.500 5v-5h-3.500z" fill="#e0bd29"/>
<path d="M1056.500 502h12M1056.500 506h8" stroke="#fff" stroke-width="1.500"/>
<text class="u" x="1084" y="513" font-size="15" fill="#555" textLength="171" lengthAdjust="spacingAndGlyphs">Добавить комментарий</text>
<!-- combine -->
<path d="M1051 542h11v14h-11z" fill="#fff" stroke="#6a6ae8" stroke-width="2"/>
<path d="M1064 541h5l4 4v12h-9z" fill="#6a6ae8"/>
<path d="M1055 553c1.500-2 2-4 2-6 .6 2 1.500 3 3 4-1.500 0-3.500 .6-5 2z" fill="none" stroke="#6a6ae8"/>
<path d="M1059 559h6v3h3l-6 5-6-5h3z" fill="#6a6ae8"/>
<text class="u" x="1084" y="559" font-size="15" fill="#555" textLength="140" lengthAdjust="spacingAndGlyphs">Объединить файлы</text>
<rect x="1025" y="573" width="341" height="1" fill="#cfcfcf"/>
<text class="u" x="1055" y="620" font-size="12" font-weight="bold" fill="#4b4b4b" textLength="280" lengthAdjust="spacingAndGlyphs">Преобразовывайте и изменяйте файлы PDF</text>
<text class="u" x="1141" y="635" font-size="12" font-weight="bold" fill="#4b4b4b" textLength="108" lengthAdjust="spacingAndGlyphs">с Acrobat Pro DC</text>
<rect x="1106" y="658" width="178" height="40" rx="20" fill="#2c7fe8"/>
<text class="u" x="1118" y="682" font-size="12" fill="#fff" textLength="154" lengthAdjust="spacingAndGlyphs">Бесплатная пробная версия</text>

<!-- taskbar -->
<rect y="728" width="1366" height="40" fill="url(#tb)"/>
<rect y="728" width="1366" height="40" fill="url(#tv)"/>
<path d="M900 729q50 15 95 39h-30q-30-22-85-39z" fill="#6ba7d8" opacity=".5"/>
<rect y="728" width="1366" height="1.500" fill="#17232e"/>
<g stroke="#d5e6f2" stroke-opacity=".75">
<rect x="122.500" y="730.500" width="58" height="37" rx="2" fill="url(#btnA)"/>
<rect x="493.500" y="730.500" width="58" height="37" rx="2" fill="url(#btn)"/>
<rect x="556.500" y="730.500" width="53" height="37" rx="2" fill="url(#btn)"/>
<rect x="611.500" y="730.500" width="4" height="37" fill="url(#btn)"/>
<rect x="618.500" y="730.500" width="58" height="37" rx="2" fill="url(#btn)"/>
<rect x="678.500" y="730.500" width="4" height="37" fill="url(#btn)"/>
<rect x="683.500" y="730.500" width="55" height="37" rx="2" fill="url(#btn)"/>
<rect x="741.500" y="730.500" width="59" height="37" rx="2" fill="url(#btnA)"/>
</g>
<rect x="1352.500" y="730.500" width="13" height="37" fill="#fff" fill-opacity=".12" stroke="#0e3558"/>
<!-- start orb -->
<circle cx="26.500" cy="749" r="18" fill="#12405e"/>
<circle cx="26.500" cy="749" r="16.500" fill="url(#orb)"/>
<path d="M18 741l7-1.500v8h-7z" fill="#f05a2a"/>
<path d="M27 739l7.500-2v10h-7.500z" fill="#7cb93a"/>
<path d="M18 749.500h7v8l-7-1.500z" fill="#2f9de0"/>
<path d="M27 749.500h7.500v9.500l-7.500-2z" fill="#f9c02c"/>
<!-- firefox -->
<circle cx="89" cy="751" r="14.500" fill="#ff7b1f"/>
<path d="M80 740c6-5 12-7 14-10 1 4 8 5 9 12 3 8 1 14-3 18-4-6-12-18-20-20z" fill="#ffb52a"/>
<path d="M75 748c2 10 10 18 20 17-8 4-18 0-20-17z" fill="#ee2d5a"/>
<circle cx="89" cy="751" r="7" fill="#6b2fb3"/>
<path d="M84 744c5-3 12 1 12 7-3-3-8-3-12-7z" fill="#3a1a8a"/>
<!-- explorer -->
<path d="M137 737h15l2 2h13v22h-30z" fill="#e8c56a"/>
<rect x="136" y="741" width="30" height="4" fill="#fff" stroke="#d1b866" stroke-width=".6"/>
<path d="M135 746h31l-1 17h-29z" fill="#f8e7a8"/>
<path d="M138 757h22l3 6h-27zM140 751h18v6h-18z" fill="#b5dcf0"/>
<rect x="144" y="755" width="13" height="3" fill="#fff"/>
<path d="M140 739h3v2h-3zM146 739h3v2h-3z" fill="#6aa84a"/>
<!-- aimp -->
<circle cx="212.500" cy="749" r="14.500" fill="#141414"/><circle cx="212.500" cy="749" r="12" fill="#f5a01e"/><circle cx="212.500" cy="749" r="9.500" fill="#141414"/>
<path d="M212.500 742l6.500 12h-13z" fill="#f5a01e"/><path d="M212.500 747l2.500 5h-5z" fill="#141414"/>
<!-- Ya -->
<path d="M260 735h21l9 15-8 14h-22z" fill="#dcdcdc"/><rect x="260" y="735" width="20" height="29" fill="#f4f4f4"/>
<text class="u" x="265" y="760" font-size="25" font-weight="bold" fill="#e41e26" textLength="15" lengthAdjust="spacingAndGlyphs">Я</text>
<!-- smile -->
<circle cx="337" cy="748" r="15.500" fill="url(#smile)"/>
<path d="M332 741v6M342 741v6" stroke="#8a5a08" stroke-width="2.400"/>
<path d="M327 749q10 10 20 0" fill="none" stroke="#8a5a08" stroke-width="1.800"/>
<rect x="331" y="758" width="22" height="9" fill="#b41a24"/>
<text class="u" x="333" y="766" font-size="8" font-weight="bold" font-style="italic" fill="#fff" textLength="18" lengthAdjust="spacingAndGlyphs">PRO</text>
<!-- film -->
<ellipse cx="401" cy="747" rx="12" ry="15.500" fill="#c5b04a"/><ellipse cx="403" cy="747" rx="11" ry="15" fill="#d9c660" stroke="#8f7c2c"/>
<path d="M403 733v28M393 747h20M396 738l14 18M410 738l-14 18" stroke="#8f7c2c" stroke-width="1.800"/>
<path d="M397 760l-10 6" stroke="#a0b8cc" stroke-width="2.500"/>
<!-- opera -->
<ellipse cx="460.500" cy="749" rx="15" ry="15.500" fill="#e4152a"/><ellipse cx="460.500" cy="749" rx="7" ry="11.500" fill="#7fc1e2"/>
<!-- Y browser -->
<circle cx="522" cy="749" r="14.500" fill="#f5f5f5"/>
<path d="M515 739l7 11 7-11M522 750v10" fill="none" stroke="#e41e26" stroke-width="3.200"/>
<!-- word -->
<path d="M567 734h24l5 5v23h-29z" fill="#fff"/>
<path d="M574 738l20 0v20h-20z" fill="#e6eef7"/>
<path d="M567 734h24v26l-24 2z" fill="#1d4e9e" opacity=".15"/>
<text class="u" x="567" y="757" font-size="22" font-weight="bold" fill="#1d4e9e" textLength="24" lengthAdjust="spacingAndGlyphs">W</text>
<path d="M578 758h18M582 753h14" stroke="#9db7d8"/>
<!-- ppt -->
<path d="M632 734h24l5 5v23h-29z" fill="#fff"/>
<text class="u" x="632" y="755" font-size="21" font-weight="bold" fill="#d2481d" textLength="14" lengthAdjust="spacingAndGlyphs">P</text>
<circle cx="652" cy="750" r="6" fill="#e8a58a" stroke="#d2481d"/>
<path d="M640 758h16" stroke="#e0a88f"/>
<!-- winrar -->
<rect x="693" y="735" width="31" height="9" fill="#b9264e"/><rect x="693" y="745" width="31" height="10" fill="#4350a6"/><rect x="693" y="756" width="31" height="9" fill="#1e8a48"/>
<rect x="703" y="736" width="11" height="29" fill="#b8662a"/>
<path d="M704 738v-4h9v4" fill="#f0c040"/><rect x="705" y="749" width="7" height="8" fill="#fff"/><rect x="707" y="750" width="3" height="6" fill="#555"/>
<path d="M696 735v30" stroke="#f0c040" stroke-width="2"/>
<!-- acrobat -->
<rect x="757" y="735" width="28" height="28" rx="4" fill="#b40f0f"/>
<path d="M762 758c5-3 8-9 8.500-18 1 6 4 10 10 11-6 0-13 1.500-18.500 7z" fill="none" stroke="#fff" stroke-width="1.600"/>
<!-- tray -->
<text class="u" x="1152" y="750" font-size="12" fill="#fff" textLength="16" lengthAdjust="spacingAndGlyphs">RU</text>
<path d="M1184 752h7l-3.500-4z" fill="#fff"/>
<path d="M1206.500 739v20" stroke="#fff" stroke-width="1.500"/><path d="M1208 741c4 2 6-1 9 1v8c-3-2-5 1-9-1z" fill="#fff"/>
<circle cx="1214.500" cy="754" r="5" fill="#d32232"/><path d="M1212 751.500l5 5M1217 751.500l-5 5" stroke="#fff" stroke-width="1.200"/>
<path d="M1229 755h1.500v2H1229zM1232 753h1.500v4H1232zM1235 750h1.500v7H1235zM1238 747h1.500v10H1238zM1241 744h1.500v13H1241z" fill="#fff"/>
<path d="M1257 748h2l3-4v15l-3-4h-2z" fill="#fff"/><path d="M1264 746q2 5 0 10" stroke="#fff" fill="none" opacity=".7"/>
<text class="u" x="1299" y="745" font-size="12" fill="#fff" textLength="28" lengthAdjust="spacingAndGlyphs">19:25</text>
<text class="u" x="1286" y="764" font-size="12" fill="#fff" textLength="54" lengthAdjust="spacingAndGlyphs">20.03.2022</text>
</svg>
</body></html>
